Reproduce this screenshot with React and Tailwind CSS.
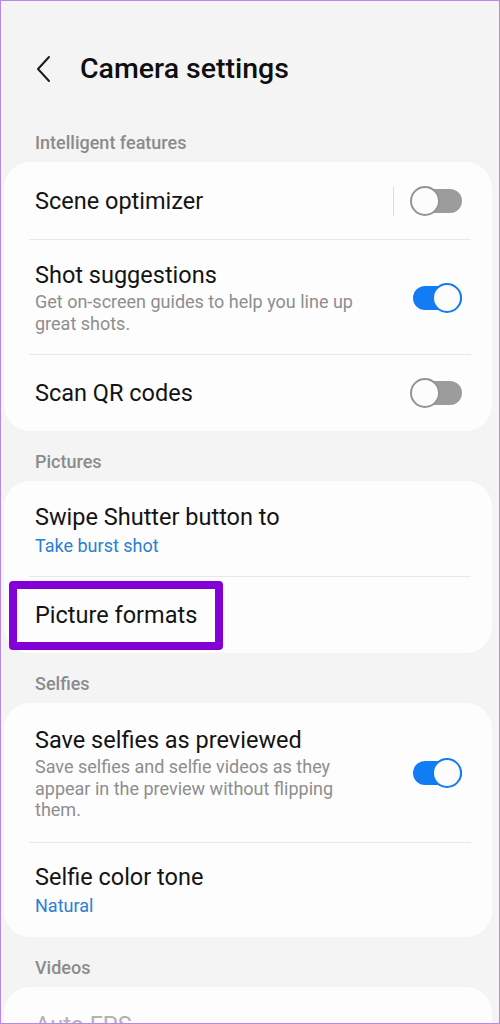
import React from 'react';

const Toggle = ({ on }) => (
  <div className="relative w-[52px] h-[30px] flex-shrink-0">
    <div
      className={
        'absolute left-[3px] right-0 top-[3px] h-[24px] rounded-full ' +
        (on ? 'bg-[#127cf4]' : 'bg-[#9c9c9c]')
      }
    />
    <div
      className={
        'absolute top-0 w-[30px] h-[30px] rounded-full bg-[#fcfcfc] border-2 ' +
        (on ? 'right-0 border-[#127cf4]' : 'left-0 border-[#939393]')
      }
    />
  </div>
);

const SectionLabel = ({ children }) => (
  <div className="pt-[16px] mb-[4px] pl-[34px] h-[46px] leading-[30px] text-[18px] font-medium text-[#8b8b8b]">
    {children}
  </div>
);

const Divider = () => <div className="ml-[25px] mr-[21px] h-px bg-[#e8e8e8]" />;

const Card = ({ children, className = '' }) => (
  <div className={'ml-[3px] mr-[7px] bg-[#fdfdfd] rounded-[26px] ' + className}>{children}</div>
);

const Title = ({ children, muted }) => (
  <div className={'text-[23.5px] leading-[28px] ' + (muted ? 'text-[#b3b3b3]' : 'text-[#141414]')}>{children}</div>
);

const Sub = ({ children }) => (
  <div className="text-[18px] leading-[21.5px] text-[#8e8e8e] mt-[2px]">{children}</div>
);

const Value = ({ children }) => (
  <div className="text-[18px] leading-[22px] text-[#2a7fd5] mt-[4px]">{children}</div>
);

export default function App() {
  return (
    <div
      className="w-[500px] h-[1024px] overflow-hidden bg-[#f4f4f4] border border-[#b689e6]"
      style={{ fontFamily: 'Roboto, "Noto Sans", sans-serif' }}
    >
      {/* Header */}
      <div className="h-[111px] flex items-center pt-[26px] pl-[35px]">
        <svg width="16" height="28" viewBox="0 0 16 28" fill="none" className="mt-[-2px]">
          <path d="M13 2 L2 14 L13 26" stroke="#1a1a1a" strokeWidth="2" strokeLinecap="round" strokeLinejoin="round" />
        </svg>
        <div className="ml-[28px] text-[28.5px] font-medium text-[#0f0f0f]">Camera settings</div>
      </div>

      <SectionLabel>Intelligent features</SectionLabel>
      <Card>
        <div className="h-[77px] flex items-center pl-[31px] pr-[30px]">
          <div className="flex-1">
            <Title>Scene optimizer</Title>
          </div>
          <div className="w-px h-[30px] bg-[#dedede] mr-[16px]" />
          <Toggle on={false} />
        </div>
        <Divider />
        <div className="flex items-center pl-[31px] pr-[30px] pt-[21px] pb-[20px]">
          <div className="flex-1">
            <Title>Shot suggestions</Title>
            <Sub>
              Get on-screen guides to help you line up
              <br />
              great shots.
            </Sub>
          </div>
          <Toggle on />
        </div>
        <Divider />
        <div className="h-[76px] flex items-center pl-[31px] pr-[30px]">
          <div className="flex-1">
            <Title>Scan QR codes</Title>
          </div>
          <Toggle on={false} />
        </div>
      </Card>

      <SectionLabel>Pictures</SectionLabel>
      <Card className="relative">
        <div className="pl-[31px] pr-[30px] pt-[22px] pb-[19px]">
          <Title>Swipe Shutter button to</Title>
          <Value>Take burst shot</Value>
        </div>
        <Divider />
        <div className="h-[76px] flex items-center pl-[31px]">
          <Title>Picture formats</Title>
        </div>
        {/* highlight box */}
        <div className="absolute left-[5px] top-[100px] w-[214px] h-[69px] border-[8px] border-[#8300d6] rounded-[4px]" />
      </Card>

      <SectionLabel>Selfies</SectionLabel>
      <Card>
        <div className="flex items-center pl-[31px] pr-[30px] pt-[23px] pb-[21px]">
          <div className="flex-1">
            <Title>Save selfies as previewed</Title>
            <Sub>
              Save selfies and selfie videos as they
              <br />
              appear in the preview without flipping
              <br />
              them.
            </Sub>
          </div>
          <Toggle on />
        </div>
        <Divider />
        <div className="pl-[31px] pr-[30px] pt-[20px] pb-[20px]">
          <Title>Selfie color tone</Title>
          <Value>Natural</Value>
        </div>
      </Card>

      <SectionLabel>Videos</SectionLabel>
      <Card>
        <div className="h-[76px] flex items-center pl-[31px]">
          <Title muted>Auto FPS</Title>
        </div>
      </Card>
    </div>
  );
}
